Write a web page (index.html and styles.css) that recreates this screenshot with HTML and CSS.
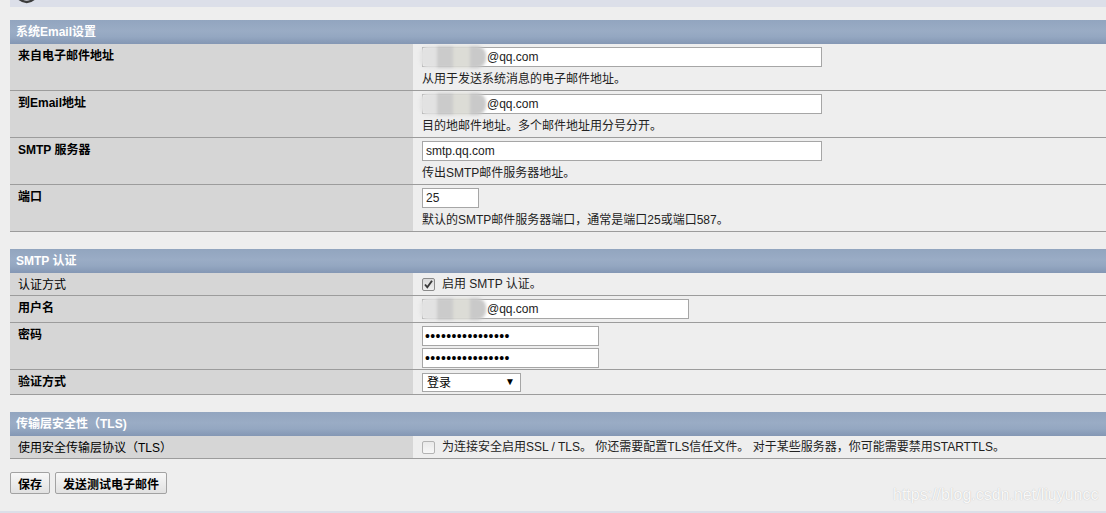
FILE: index.html
```html
<!DOCTYPE html>
<html lang="zh-CN">
<head>
<meta charset="utf-8">
<title>Email设置</title>
<link rel="stylesheet" href="styles.css">
</head>
<body>
<div class="topbar"><svg class="logo" width="22" height="7" viewBox="0 0 22 7"><path d="M2 -2 Q11 6 19 -2" fill="none" stroke="#3c3c3c" stroke-width="2.4"/></svg></div>
<main class="page">
  <table class="settings">
    <colgroup><col class="c-label"><col></colgroup>
    <thead><tr><th colspan="2">系统Email设置</th></tr></thead>
    <tbody>
      <tr>
        <td class="label b">来自电子邮件地址</td>
        <td class="value">
          <span class="field"><input class="text w400 masked" type="text" value="@qq.com"><span class="redact"><i class="r1"></i><i class="r2"></i><i class="r3"></i><i class="r4"></i></span></span>
          <div class="desc">从用于发送系统消息的电子邮件地址。</div>
        </td>
      </tr>
      <tr>
        <td class="label b">到Email地址</td>
        <td class="value">
          <span class="field"><input class="text w400 masked" type="text" value="@qq.com"><span class="redact"><i class="r1"></i><i class="r2"></i><i class="r3"></i><i class="r4"></i></span></span>
          <div class="desc">目的地邮件地址。多个邮件地址用分号分开。</div>
        </td>
      </tr>
      <tr>
        <td class="label b">SMTP 服务器</td>
        <td class="value">
          <span class="field"><input class="text w400" type="text" value="smtp.qq.com"></span>
          <div class="desc">传出SMTP邮件服务器地址。</div>
        </td>
      </tr>
      <tr>
        <td class="label b">端口</td>
        <td class="value">
          <span class="field"><input class="text w57" type="text" value="25"></span>
          <div class="desc">默认的SMTP邮件服务器端口，通常是端口25或端口587。</div>
        </td>
      </tr>
    </tbody>
  </table>

  <table class="settings">
    <colgroup><col class="c-label"><col></colgroup>
    <thead><tr><th colspan="2">SMTP 认证</th></tr></thead>
    <tbody>
      <tr>
        <td class="label">认证方式</td>
        <td class="value">
          <label class="opt"><span class="check on" role="checkbox" aria-checked="true"><svg width="11" height="11" viewBox="0 0 11 11"><path d="M2 5.5 L4.3 8.3 L9 1.8" fill="none" stroke="#3a3a3a" stroke-width="1.9"/></svg></span>启用 SMTP 认证。</label>
        </td>
      </tr>
      <tr>
        <td class="label b">用户名</td>
        <td class="value">
          <span class="field"><input class="text w267 masked" type="text" value="@qq.com"><span class="redact"><i class="r1"></i><i class="r2"></i><i class="r3"></i><i class="r4"></i></span></span>
        </td>
      </tr>
      <tr>
        <td class="label b">密码</td>
        <td class="value pw">
          <span class="field"><input class="text w177 pass" type="password" value="aaaaaaaaaaaaaaaa"></span>
          <span class="field second"><input class="text w177 pass" type="password" value="aaaaaaaaaaaaaaaa"></span>
        </td>
      </tr>
      <tr>
        <td class="label b">验证方式</td>
        <td class="value sel">
          <span class="select"><select><option>登录</option></select></span>
        </td>
      </tr>
    </tbody>
  </table>

  <table class="settings last">
    <colgroup><col class="c-label"><col></colgroup>
    <thead><tr><th colspan="2">传输层安全性（TLS)</th></tr></thead>
    <tbody>
      <tr>
        <td class="label">使用安全传输层协议（TLS）</td>
        <td class="value">
          <label class="opt"><span class="check" role="checkbox" aria-checked="false"></span>为连接安全启用SSL / TLS。 你还需要配置TLS信任文件。 对于某些服务器，你可能需要禁用STARTTLS。</label>
        </td>
      </tr>
    </tbody>
  </table>

  <div class="actions">
    <button type="button">保存</button>
    <button type="button">发送测试电子邮件</button>
  </div>
</main>
<div class="bottom"></div>
<div class="watermark">https://blog.csdn.net/liuyuncc</div>
</body>
</html>
```

FILE: styles.css
```css
html, body {
  margin: 0;
  background: #eeeeee;
}
body {
  position: relative;
  font: 12px/14px "Liberation Sans", "Noto Sans CJK SC", sans-serif;
  color: #000;
  height: 513px;
  overflow: hidden;
}
.topbar {
  height: 7px;
  margin-left: 10px;
  background: #dcdfe9;
  overflow: hidden;
}
.logo {
  display: block;
  margin-left: 6px;
}
.page {
  padding: 13px 0 0 10px;
}
.settings {
  width: 100%;
  table-layout: fixed;
  border-collapse: collapse;
  margin-bottom: 17px;
}
.settings.last {
  margin-bottom: 13px;
}
.c-label {
  width: 403px;
}
.settings th {
  height: 24px;
  padding: 0 6px;
  text-align: left;
  color: #fff;
  font-weight: bold;
  background: linear-gradient(#92a5bf, #9aacc5 45%, #94a7c1 70%, #8497b4);
}
.settings td {
  border-bottom: 1px solid #9c9c9c;
  vertical-align: top;
}
.label {
  background: #d6d6d6;
  padding: 5px 8px 3px;
}
.label.b {
  font-weight: bold;
}
.value {
  padding: 3px 9px;
}
.value.pw {
  padding-bottom: 1px;
}
.value.sel {
  padding-bottom: 2px;
}
.field {
  position: relative;
  display: block;
  width: max-content;
}
.field.second {
  margin-top: 2px;
}
.text {
  display: block;
  box-sizing: border-box;
  height: 20px;
  margin: 0;
  padding: 1px 3px;
  border: 1px solid #a6a6a6;
  background: #fff;
  color: #222;
  font: 12px "Liberation Sans", "Noto Sans CJK SC", sans-serif;
  outline: none;
}
.w400 { width: 400px; }
.w57 { width: 57px; }
.w267 { width: 267px; }
.w177 { width: 177px; }
.masked {
  padding-left: 64px;
}
.pass {
  font-size: 14px;
  letter-spacing: 0.4px;
  color: #000;
  padding-left: 2px;
}
.redact {
  position: absolute;
  left: -2px;
  top: -1px;
  width: 66px;
  height: 22px;
  display: flex;
  filter: blur(1.6px);
  pointer-events: none;
}
.redact i {
  flex: 1;
}
.redact .r1 { background: #e2e2e2; border-radius: 8px 0 0 8px; }
.redact .r2 { background: #cbcbcb; }
.redact .r3 { background: #dcdcd6; }
.redact .r4 { background: #c9c9c9; border-radius: 0 9px 9px 0; }
.desc {
  margin-top: 5px;
  line-height: 15px;
  color: #222;
}
.opt {
  display: flex;
  align-items: center;
  gap: 7px;
  height: 16px;
  color: #222;
}
.check {
  flex: none;
  box-sizing: border-box;
  width: 13px;
  height: 13px;
  border: 1px solid #b3b3b3;
  border-radius: 2px;
  background: linear-gradient(#e9e9e9, #f7f7f7);
  display: flex;
  align-items: center;
  justify-content: center;
}
.check.on {
  border-color: #8a8a8a;
  background: linear-gradient(#dadada, #efefef);
}
.select {
  position: relative;
  display: block;
  width: max-content;
}
.select select {
  display: block;
  appearance: none;
  -webkit-appearance: none;
  box-sizing: border-box;
  width: 99px;
  height: 19px;
  margin: 0;
  padding: 0 4px;
  border: 1px solid #a6a6a6;
  border-radius: 0;
  background: #fff;
  color: #000;
  font: 12px "Liberation Sans", "Noto Sans CJK SC", sans-serif;
}
.select::after {
  content: "▼";
  position: absolute;
  right: 6px;
  top: 4px;
  font-size: 10px;
  line-height: 10px;
  color: #000;
  pointer-events: none;
}
.actions {
  display: flex;
  gap: 5px;
}
.actions button {
  height: 22px;
  margin: 0;
  padding: 0 7px;
  border: 1px solid #a2a2a2;
  border-radius: 2px;
  background: linear-gradient(#f8f8f8, #e1e1e1);
  color: #000;
  font: bold 12px "Liberation Sans", "Noto Sans CJK SC", sans-serif;
}
.bottom {
  margin-top: 17px;
  height: 3px;
  background: #dcdfe8;
}
.watermark {
  position: absolute;
  left: 893px;
  top: 486px;
  font: 16px/18px "Liberation Sans", sans-serif;
  color: rgba(255, 255, 255, 0.92);
  text-shadow: 0 0 1px #b4b4b4;
}
```
